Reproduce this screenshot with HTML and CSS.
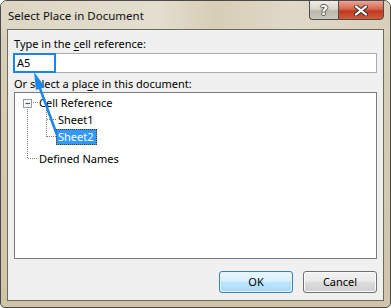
FILE: index.html
```html
<!doctype html>
<html>
<head>
<meta charset="UTF-8">
<title>Select Place in Document</title>
<link rel="stylesheet" href="styles.css">
</head>
<body>
	<div class="window">
		<div class="titlebar">
			<span class="title">Select Place in Document</span>
			<div class="caption">
				<a class="cap-help" href="javascript:void(0);">?</a>
				<a class="cap-close" href="javascript:void(0);">
					<svg width="14" height="11" viewBox="0 0 14 11"><path d="M2 1.5 L12 9.5 M12 1.5 L2 9.5" stroke="#4a3a36" stroke-width="4.2" stroke-linecap="round"/><path d="M2 1.5 L12 9.5 M12 1.5 L2 9.5" stroke="#fff" stroke-width="2.2" stroke-linecap="round"/></svg>
				</a>
			</div>
		</div>
		<div class="client">
			<div class="label">Type in the <u>c</u>ell reference:</div>
			<div class="ref-box">
				<span class="ref-text">A5</span>
				<span class="ref-mark"></span>
			</div>
			<div class="label label2">Or select a pla<u>c</u>e in this document:</div>
			<div class="tree">
				<svg class="tree-lines" width="100" height="80">
					<rect x="8.5" y="6.5" width="8" height="8" fill="#fcfcfc" stroke="#8f9aa4"/>
					<line x1="10.5" y1="10.5" x2="15" y2="10.5" stroke="#3b5a90" stroke-width="1.2"/>
					<g stroke="#808080" stroke-dasharray="1 1">
						<line x1="18" y1="9.5" x2="23" y2="9.5"/>
						<line x1="12.5" y1="16" x2="12.5" y2="66"/>
						<line x1="13" y1="65.5" x2="23" y2="65.5"/>
						<line x1="31.5" y1="17" x2="31.5" y2="44"/>
						<line x1="32" y1="26.5" x2="41" y2="26.5"/>
						<line x1="32" y1="43.5" x2="41" y2="43.5"/>
					</g>
				</svg>
				<div class="node">Cell Reference</div>
				<div class="node child">Sheet1</div>
				<div class="node child"><span class="selected">Sheet2</span></div>
				<div class="node last">Defined Names</div>
			</div>
			<div class="buttons">
				<a class="btn btn-ok" href="javascript:void(0);">OK</a>
				<a class="btn" href="javascript:void(0);">Cancel</a>
			</div>
		</div>
		<!-- callout arrow -->
		<svg class="arrow" width="391" height="308">
			<line x1="57" y1="135" x2="38" y2="83" stroke="#1c86e6" stroke-width="2.5"/>
			<polygon points="34,72 45,87 36,90" fill="#1c86e6"/>
		</svg>
	</div>
</body>
</html>
```

FILE: styles.css
```css
*{margin:0;padding:0;box-sizing:border-box;}
body{width:391px;height:308px;overflow:hidden;background:#fff;font-family:"Noto Sans","Open Sans",sans-serif;font-size:11px;color:#000;}
a{text-decoration:none;color:inherit;}
/*window start*/
.window{position:relative;width:391px;height:308px;border:1px solid #4a4a48;border-radius:7px 7px 5px 5px;background:linear-gradient(180deg,#e6e0d1 0%,#d8cfb8 12%,#d3c9ae 60%,#cfc4a7 100%);display:flex;flex-direction:column;}
.titlebar{height:28px;display:flex;justify-content:space-between;align-items:flex-start;background:linear-gradient(90deg,#ddd6c4 0%,#e4decf 40%,#d7ceb6 55%,#e0d9c8 75%,#d8cfb9 100%);border-radius:6px 6px 0 0;}
.title{padding:7px 0 0 7px;line-height:16px;font-size:11.5px;color:#101010;}
.caption{display:flex;margin:-1px 6px 0 0;}
.caption a{height:20px;display:flex;align-items:center;justify-content:center;border:1px solid #4c4c4c;}
.cap-help{width:29px;border-right:none !important;border-radius:0 0 0 4px;background:linear-gradient(180deg,#eeece6 0%,#d9d6cc 45%,#bcb8ad 55%,#c9c6bc 100%);color:#fff;font:bold 14px "DejaVu Sans",sans-serif;text-shadow:-1px 0 #555,1px 0 #555,0 -1px #555,0 1px #555;}
.cap-close{width:46px;border-radius:0 0 4px 0;background:linear-gradient(180deg,#e9a596 0%,#d8664f 45%,#c2381e 55%,#d25a3c 100%);}
.client{flex:1;margin:0 6px 6px;border:1px solid #6e6a60;background:#f0f0f0;padding:6px 6px 7px 5px;display:flex;flex-direction:column;}
/*window end*/
.label{line-height:15px;height:15px;padding-left:1px;}
.label u{text-decoration:underline;text-underline-offset:2px;}
.label2{margin-top:3px;}
.ref-box{position:relative;margin-top:2px;height:20px;background:#fff;border:1px solid #abadb3;}
.ref-text{display:block;padding-left:3px;line-height:18px;}
.ref-mark{position:absolute;left:-1px;top:-1px;width:43px;height:20px;border:2px solid #1c86e6;}
/*tree start*/
.tree{position:relative;margin:1px 0 0 1px;height:167px;background:#fff;border:1px solid #7a7a7a;padding-top:1px;}
.tree-lines{position:absolute;left:0;top:0;}
.node{height:17px;line-height:17px;padding-left:24px;}
.node.child{padding-left:43px;}
.node.last{margin-top:5px;}
.selected{display:inline-block;height:16px;line-height:14px;padding:0 2px 0 1px;margin-left:-2px;background:#3399ff;color:#fff;border:1px dotted #5a3a10;}
/*tree end*/
.buttons{margin-top:12px;display:flex;justify-content:flex-end;gap:10px;}
.btn{width:74px;height:22px;line-height:20px;text-align:center;border:1px solid #707070;border-radius:3px;background:linear-gradient(180deg,#f2f2f2 0%,#ebebeb 45%,#dddddd 50%,#cfcfcf 100%);box-shadow:inset 0 0 0 1px #fbfbfb;}
.btn-ok{border-color:#3c7fb1;background:linear-gradient(180deg,#eaf6fd 0%,#d9f0fc 45%,#bee6fd 50%,#a7d9f5 100%);box-shadow:inset 0 0 0 1px #e4f3fb;}
.arrow{position:absolute;left:-1px;top:-1px;pointer-events:none;}
```
